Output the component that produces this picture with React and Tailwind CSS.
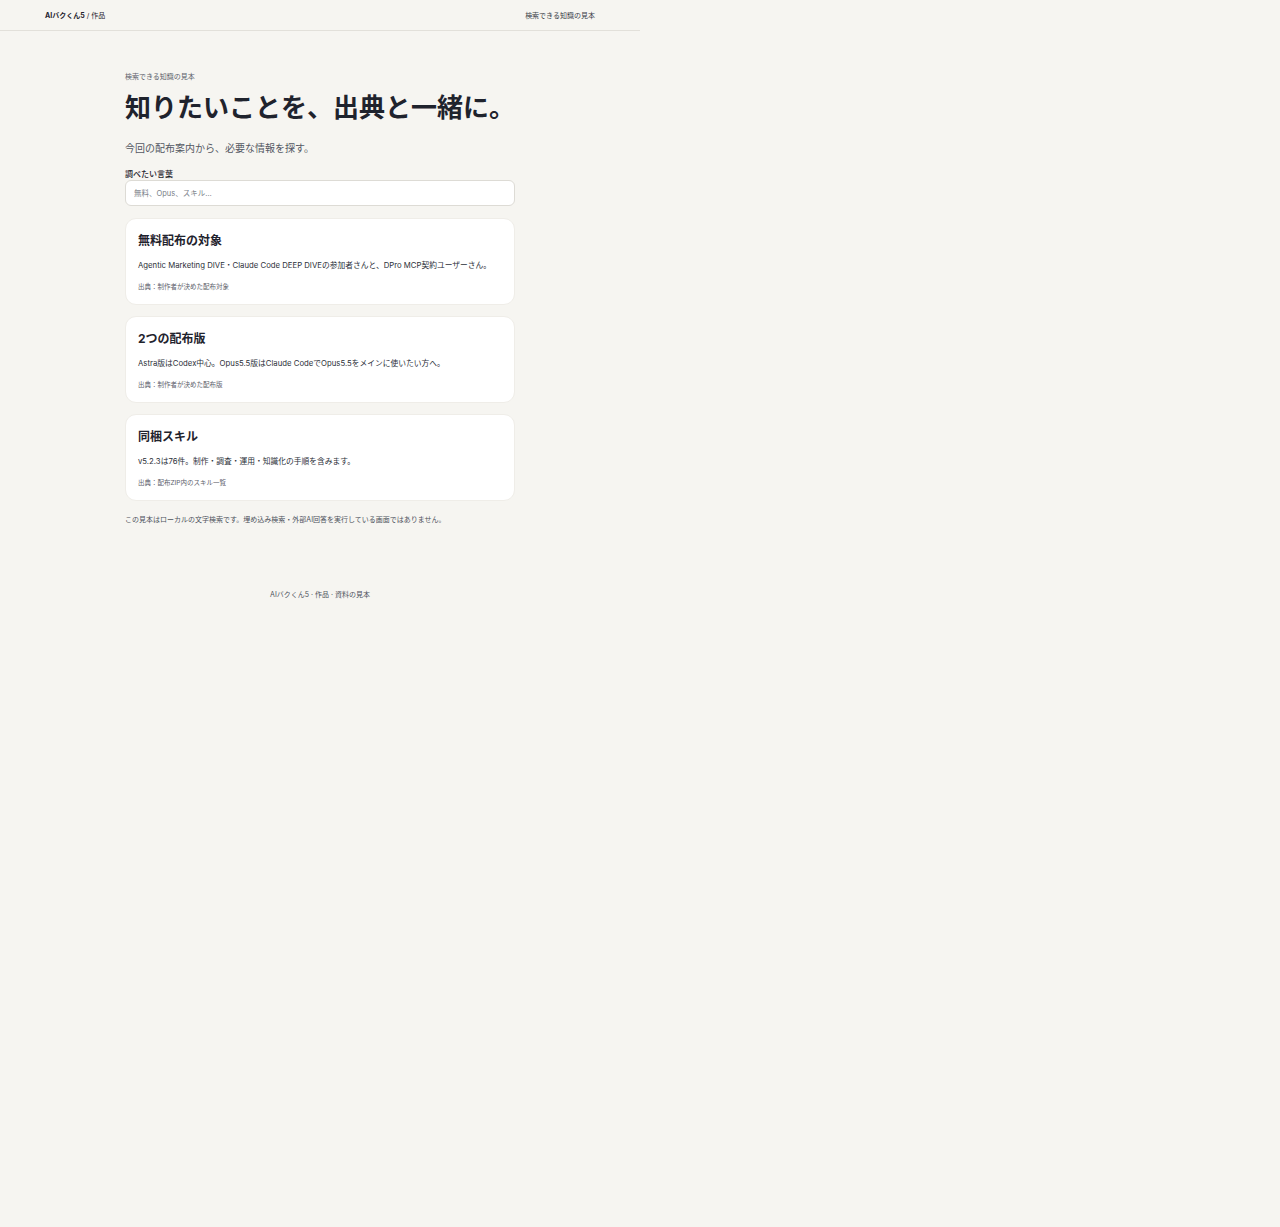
import React, { useState } from 'react';

const items = [
  {
    title: '無料配布の対象',
    body: 'Agentic Marketing DIVE・Claude Code DEEP DIVEの参加者さんと、DPro MCP契約ユーザーさん。',
    source: '出典：制作者が決めた配布対象',
  },
  {
    title: '2つの配布版',
    body: 'Astra版はCodex中心。Opus5.5版はClaude CodeでOpus5.5をメインに使いたい方へ。',
    source: '出典：制作者が決めた配布版',
  },
  {
    title: '同梱スキル',
    body: 'v5.2.3は76件。制作・調査・運用・知識化の手順を含みます。',
    source: '出典：配布ZIP内のスキル一覧',
  },
];

function App() {
  const [query, setQuery] = useState('');

  const shown = items.filter(
    (it) => !query || (it.title + it.body + it.source).includes(query)
  );

  return (
    <div className="min-h-screen bg-[#f6f5f1] text-[#1f232d] font-['Inter','Noto_Sans_CJK_JP',sans-serif]">
      <div className="w-[640px]">
        {/* Top bar */}
        <header className="h-[31px] pt-[2px] border-b border-[#e2e0da] px-[45px] flex items-center justify-between text-[7px]">
          <div>
            <span className="font-bold">AIバクくん5</span> / 作品
          </div>
          <div className="text-[#3a3e48]">検索できる知識の見本</div>
        </header>

        {/* Main */}
        <main className="w-[390px] mx-auto pt-[41px]">
          <p className="text-[7px] leading-[10px] text-[#5d616b]">検索できる知識の見本</p>
          <h1 className="mt-[9px] text-[26px] leading-[34px] font-bold">
            知りたいことを、出典と一緒に。
          </h1>
          <p className="mt-[16px] text-[10px] leading-[14px] text-[#545863]">今回の配布案内から、必要な情報を探す。</p>

          <label className="block mt-[14px] text-[8px] leading-[10px] font-medium">調べたい言葉</label>
          <input
            value={query}
            onChange={(e) => setQuery(e.target.value)}
            placeholder="無料、Opus、スキル…"
            className="block mt-[1px] w-full h-[26px] px-[8px] rounded-[6px] border border-[#dddbd5] bg-white text-[7.5px] placeholder:text-[#7b7f88] outline-none"
          />

          <div className="mt-[12px] flex flex-col gap-[11px]">
            {shown.map((it) => (
              <section key={it.title} className="bg-white rounded-[11px] border border-[#efede8] px-[12px] pt-[14px] pb-[12px]">
                <h2 className="text-[12px] leading-[16px] font-bold">{it.title}</h2>
                <p className="mt-[10px] text-[7.75px] leading-[12px] text-[#2b2f38] whitespace-nowrap">{it.body}</p>
                <p className="mt-[11px] text-[6.5px] leading-[10px] text-[#5d616b]">{it.source}</p>
              </section>
            ))}
          </div>

          <p className="mt-[14px] text-[7px] leading-[10px] text-[#4d525c]">
            この見本はローカルの文字検索です。埋め込み検索・外部AI回答を実行している画面ではありません。
          </p>
        </main>

        <footer className="pt-[65px] pb-[20px] text-center text-[7px] leading-[10px] text-[#4d525c]">
          AIバクくん5 · 作品 · 資料の見本
        </footer>
      </div>
    </div>
  );
}

export default App;
